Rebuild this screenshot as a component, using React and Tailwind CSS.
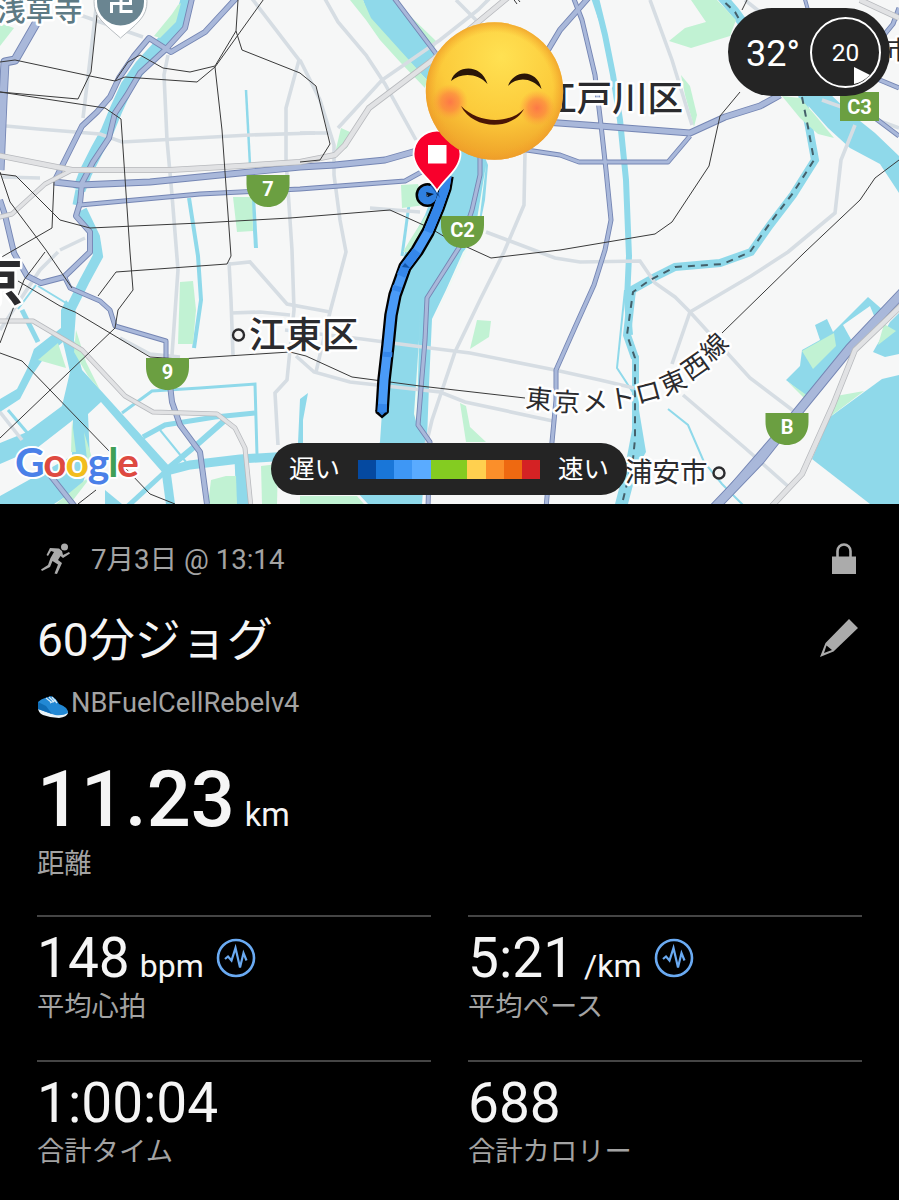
const WATER = "#8fd9ea";
const PARK = "#c1f2d3";

// rios y canales dibujados como linea
const canals = [
    { w: 13, d: "M188 -4L181 22L163 42L141 66L127 86L116 110L107 132L97 150L86 172L79 190" },
    { w: 7, d: "M79 190L76 205" },
    { w: 10, d: "M82 210L95 237L98 256L84 282L70 310" },
    { w: 4, d: "M189 198L198 256L201 300L194 348" },
    { w: 2.5, d: "M246 90L250 165" },
    { w: 4, d: "M253 196L256 248" },
    { w: 3, d: "M411 190L402 256" },
    { w: 5, d: "M143 437L165 425L215 417L255 413" },
    { w: 3, d: "M122 413L152 391L200 388L255 384L257 455" },
    { w: 6, d: "M165 471L200 442L225 420" },
    { w: 2, d: "M160 430L186 462" },
    { w: 9, d: "M167 471L190 465L240 459L290 456" },
    { w: 13, d: "M241 458L243 508" },
    { w: 9, d: "M166 471L171 508" },
    { w: 5, d: "M128 506L166 471" },
    { w: 5, d: "M22 310L38 342" },
    { w: 2, d: "M38 286L66 303M18 309L36 285" },
    { w: 3, d: "M8 410L30 436" },
    { w: 6, d: "M594 -10L605 35L613 75L620 120L626 180L629 256L627 300L630 335" },
    { w: 10, d: "M716 -10L735 12L755 40L790 80" },
    { w: 8, d: "M801 90L809 127L815 160L793 195L770 225L751 252L720 263L675 267L655 277L632 290L627 335L635 358" },
    { w: 2, d: "M625 290L617 368L634 394M668 409L688 425L704 462L722 484L744 506" },
    { w: 3, d: "M592 -4L600 20" },
];

const waters = [
    "M363 0L393 0L433 47L470 100L482 150L488 165L485 200L478 235L463 252L446 290L432 319L429 385L427 440L422 504L368 504L355 490L380 442L382 412L388 340L395 290L405 252L425 215L440 175L446 120L427 80L370 20Z",
    "M66 300L76 312L74 340L82 370L104 394L170 467L163 473L101 402L88 414L90 460L82 486L54 504L0 504L0 496L72 456L73 420L37 448L0 464L0 443L27 432L62 406L70 372L63 342L44 358L33 374L20 399L0 412L0 399L17 389L27 369L34 349L61 328L61 310Z",
    "M300 399L308 393L303 420L303 443L298 443Z",
    "M105 490L122 504L105 504Z",
    "M632 350L639 356L639 410L646 452L638 466L628 504L615 504L626 462L632 430Z",
    "M796 92L828 92L850 113L875 133L899 156L899 193L880 164L850 148L828 128Z",
    "M812 459L830 417L882 379L899 375L899 504L870 504Z",
    "M786 380L800 366L802 350L820 340L815 325L827 319L833 332L868 297L884 311L875 318L870 306L843 325L853 343L822 390L806 396Z",
    "M899 313L890 322L873 352L885 357L899 354Z",
];

const parks = [
    "M172 14L178 5L181 3L176 22L160 38L154 36Z",
    "M0 23L14 28L0 46Z",
    "M233 197L252 197L253 231L237 232Z",
    "M350 0L363 0L371 18L427 80L425 88L400 62L380 40L366 20Z",
    "M393 0L402 8L437 42L433 50Z",
    "M341 128L350 132L347 148L335 153Z",
    "M401 185L418 184L425 205L402 208Z",
    "M426 215L410 240L403 252L412 252L430 222Z",
    "M180 282L193 281L196 310L193 344L178 344Z",
    "M38 360L58 343L66 368Z",
    "M76 330L86 362L100 390L88 376L74 352Z",
    "M72 420L71 452L76 452ZM84 432L92 458L87 460Z",
    "M56 504L85 480L90 478L70 504Z",
    "M211 480L226 476L236 476L237 504L208 504Z",
    "M261 466L278 464L277 504L262 504Z",
    "M300 496L357 496L364 504L300 504Z",
    "M477 320L491 321L489 337L470 349Z",
    "M460 403L466 406L470 427L486 442L466 442Z",
    "M691 0L717 0L736 20L730 36L691 48L669 41L685 28L706 22Z",
    "M681 75L690 86L697 115L694 127L685 95Z",
    "M782 96L800 98L815 115L834 138L818 134L800 118Z",
    "M802 351L834 333L836 346L813 369Z",
    "M788 382L808 396L804 398Z",
    "M884 324L896 331L878 345Z",
    "M836 396L864 391L831 416Z",
];

const streets = [
    "M97 0L90 60L83 118",
    "M80 15L100 22L143 37",
    "M6 126L38 129L100 134L122 142L250 135L315 133",
    "M168 55L164 75L167 140L172 195L178 270L172 355",
    "M250 -4L299 60L286 108L286 160L292 250L294 310L287 380L275 393L278 445",
    "M2 177L40 178",
    "M60 250L85 238",
    "M0 330L40 270L58 252",
    "M320 -10L338 22L366 55L385 84L416 140",
    "M300 60L320 100L334 145L334 175L340 220L346 252L330 312L316 372",
    "M338 128L382 80L440 40L478 10L492 -4",
    "M456 0L476 20",
    "M300 133L330 133",
    "M370 208L420 212",
    "M525 152L524 205L504 252L480 300L455 352L432 420L426 445",
    "M486 232L555 258L580 262L640 261L655 283L675 297L690 312L720 345L750 378L795 412",
    "M690 312L672 364",
    "M690 312L751 276L788 252L835 213L841 160L855 125",
    "M650 0L672 60L692 125",
    "M745 0L760 12",
    "M285 330L362 339L430 348L470 353L555 370L600 380L634 388",
    "M230 264L250 262L287 304L330 312",
    "M229 262L231 300L233 355M231 313L260 312L290 315",
    "M296 356L314 372L350 382L440 392L465 402L553 421",
    "M683 395L745 448L790 488",
    "M120 338L150 354L180 357",
    "M0 412L22 440",
    "M822 100L850 110L899 128",
];

// autopistas
const majors = [
    { w: 9, d: "M38 20L15 60L5 62L3 100L0 170" },
    { w: 4, d: "M4 60L2 160" },
    { w: 6, d: "M193 -6L185 28L165 50L140 73L127 95L115 113L109 138L93 162L82 183L80 203L76 216L90 232L90 252L64 277L41 283L27 276L14 253L5 215L0 200" },
    { w: 6, d: "M240 -6L205 32L171 52L149 38L134 56L119 78L110 97L97 112L82 126L70 150L54 182" },
    { w: 7, d: "M54 182L80 185L150 182L240 173L300 167L335 165L385 160L420 150" },
    { w: 5, d: "M80 205L200 194L300 189L405 181L425 170" },
    { w: 5, d: "M64 276L70 288L100 301L110 310L115 326L166 341L166 362" },
    { w: 6, d: "M170 385L172 402L180 425L200 452L207 504" },
    { w: 6, d: "M50 475L76 508" },
    { w: 5, d: "M391 -6L434 51L470 100L480 150L480 175L472 210L460 246L427 298L425 340L418 425L430 442L428 508" },
    { w: 5, d: "M572 -6L582 20L595 75L601 125L606 170L611 220L605 250L594 285L576 325L556 370L556 400L552 442L546 508" },
    { w: 6, d: "M590 -4L560 30L548 50" },
    { w: 7, d: "M545 122L600 126L690 133L725 117L760 106L780 95" },
    { w: 5, d: "M520 149L560 155L579 162L668 162L690 136" },
    { w: 4, d: "M804 -4L808 10" },
    { w: 5, d: "M899 8L893 24L884 35M875 78L899 88M875 118L899 136" },
    { w: 10, d: "M905 290L850 348L797 413L760 460L712 510" },
    { w: 4, d: "M905 288L795 412L712 508" },
];

const highways = [
    { w: 6, d: "M-4 155L72 170L170 170L240 166L300 162L335 155L345 145L369 108L430 62L512 -6" },
    { w: 5, d: "M72 170L45 184L12 214L-4 218" },
    { w: 5, d: "M-4 321L33 321L82 350L125 396L153 412L217 414L235 428L245 448L251 508" },
    { w: 6, d: "M905 302L855 350L833 405L802 474L770 508" },
    { w: 6, d: "M860 0L899 18" },
];

const rails = [
    "M0 62L15 60L90 76L115 81L125 77L197 82L215 67L266 -4",
    "M97 15L91 72L78 99L0 92L105 108L121 119L130 252L133 290L118 310L115 328L0 438",
    "M115 81L128 62L140 55L163 68L190 72L215 66L236 31L238 0",
    "M236 31L242 50L300 73L316 86L330 144L320 160L300 162",
    "M215 67L222 130L231 256L227 264L116 272L98 296",
    "M0 174L16 176L60 220L90 228L200 223L290 218L390 210L430 228L445 237L491 258L560 250L655 234L672 222L709 166L720 116L740 92",
    "M54 182L52 228L0 258",
    "M0 172L10 202L46 250L72 288",
    "M18 281L60 306L75 312L150 357L180 359L290 352L306 356L352 377L420 386L525 398",
    "M45 252L24 280L0 343",
    "M0 353L22 361L110 452L150 494L175 504",
    "M96 490L78 504",
    "M722 333L805 252L860 200L875 178L899 160",
    "M748 -2L742 10",
    "M512 -3L517 4M516 -3L520 2",
];

const lineLabel = [
    { c: "東", x: 539, y: 399, r: 6 },
    { c: "京", x: 567, y: 402, r: 3 },
    { c: "メ", x: 595, y: 401, r: -3 },
    { c: "ト", x: 622, y: 398, r: -9 },
    { c: "ロ", x: 648, y: 392, r: -15 },
    { c: "東", x: 673, y: 382, r: -24 },
    { c: "西", x: 695, y: 366, r: -35 },
    { c: "線", x: 714, y: 347, r: -44 },
];

const shields = [
    { t: "7", x: 268, y: 175 },
    { t: "C2", x: 462.5, y: 216 },
    { t: "9", x: 167.5, y: 358 },
    { t: "B", x: 787, y: 413 },
];

const speedColors = [
    "bg-[#0549a0]", "bg-[#1976d8]", "bg-[#3e97f5]", "bg-[#5aabff]", "bg-[#84cc21]",
    "bg-[#84cc21]", "bg-[#ffd04f]", "bg-[#fb8f2a]", "bg-[#ee6911]", "bg-[#d42224]",
];

const ROUTE = "M382 412L384 380L388 345L391 315L395 295L405 267L417 251L428 232L438 208L445 188L447 176";

const MapLabel = ({ x, y, size, color = "#2b2b2e", weight = 500, children }) => (
    <text x={x} y={y} fontSize={size} fontWeight={weight} fill={color} stroke="#fff" strokeWidth="5"
        strokeLinejoin="round" paintOrder="stroke">
        {children}
    </text>
);

const Smile = () => (
    <g>
        <circle cx="494.5" cy="91" r="68.7" fill="url(#face)" />
        <circle cx="494.5" cy="91" r="68.7" fill="url(#faceShade)" />
        <ellipse cx="450" cy="102" rx="18" ry="18" fill="url(#blush)" />
        <ellipse cx="537" cy="108" rx="18" ry="18" fill="url(#blush)" />
        <path d="M451 81C456 65 481 63 487.500 84C478 73 461 72 451 81Z" fill="#2a1608" />
        <path d="M508 86C514 69 537 69 541.500 89C532 78 518 76 508 86Z" fill="#2a1608" />
        <path d="M461 106C478 123 508 125 524 109C512 131 473 130 461 106Z" fill="#4a1505" />
    </g>
);

const CityMap = () => (
    <svg viewBox="0 0 899 504" className="block h-[504px] w-[899px] font-['Noto_Sans_CJK_JP',sans-serif]" fill="none">
        <defs>
            <radialGradient id="face" cx="0.55" cy="0.25" r="0.8">
                <stop offset="0" stopColor="#ffe152" />
                <stop offset="0.55" stopColor="#fccb3b" />
                <stop offset="1" stopColor="#ec9a26" />
            </radialGradient>
            <radialGradient id="faceShade" cx="0.5" cy="0.5" r="0.5">
                <stop offset="0.85" stopColor="#f6a92c" stopOpacity="0" />
                <stop offset="1" stopColor="#ee9c2a" stopOpacity="0.75" />
            </radialGradient>
            <radialGradient id="blush">
                <stop offset="0" stopColor="#fd7448" stopOpacity="0.95" />
                <stop offset="0.5" stopColor="#fd7d42" stopOpacity="0.65" />
                <stop offset="1" stopColor="#ff9a3c" stopOpacity="0" />
            </radialGradient>
        </defs>
        <rect width="899" height="504" fill="#f6f7f7" />
        {waters.map((d) => <path key={d} d={d} fill={WATER} />)}
        {canals.map((c) => <path key={c.d} d={c.d} stroke={WATER} strokeWidth={c.w} />)}
        {parks.map((d) => <path key={d} d={d} fill={PARK} />)}
        {/* franja de tierra junto a la C2 */}
        <path d="M420 300L417 425L414 414L419 340ZM486 165L476 225L436 315L433 322L466 252L480 215Z" fill="#eefaf2" />
        {streets.map((d) => <path key={d} d={d} stroke="#d6dde3" strokeWidth="3.6" />)}
        {majors.map((m) => <path key={m.d} d={m.d} stroke="#7586b4" strokeWidth={m.w} strokeLinejoin="round" />)}
        {majors.map((m) => <path key={m.d} d={m.d} stroke="#a9b8da" strokeWidth={m.w - 1.8} strokeLinejoin="round" />)}
        {highways.map((m) => <path key={m.d} d={m.d} stroke="#b7b9bd" strokeWidth={m.w} strokeLinejoin="round" />)}
        {highways.map((m) => <path key={m.d} d={m.d} stroke="#e1e2e4" strokeWidth={m.w - 1.5} strokeLinejoin="round" />)}
        {rails.map((d) => <path key={d} d={d} stroke="#3a3a3a" strokeWidth="1" />)}
        <path d="M716 -6L735 12L742 24M802 97L808 127L814 160L793 193L770 223L750 252L723 264L675 267L650 280L633 292L627 335L635 358L635 439L633 459L622 504"
            stroke="#44606a" strokeWidth="2" strokeDasharray="7 6" />

        <MapLabel x="-3" y="21" size="28.5" color="#5d7a84" weight="500">浅草寺</MapLabel>
        <MapLabel x="541" y="111" size="35.5">江戸川区</MapLabel>
        <MapLabel x="249" y="348" size="36.5">江東区</MapLabel>
        <MapLabel x="-30" y="302" size="53" weight="700">京</MapLabel>
        <MapLabel x="625" y="482" size="27.5" weight="400">浦安市</MapLabel>
        <MapLabel x="886" y="59" size="25" weight="400">市川</MapLabel>
        {lineLabel.map((l) => (
            <g key={l.x} transform={`translate(${l.x} ${l.y}) rotate(${l.r})`} textAnchor="middle">
                <MapLabel x="0" y="9.5" size="26" weight="400">{l.c}</MapLabel>
            </g>
        ))}
        <circle cx="238.5" cy="335" r="5.5" stroke="#2b2b2e" strokeWidth="2.4" fill="#f3f3f3" />
        <circle cx="719" cy="473" r="5.5" stroke="#2b2b2e" strokeWidth="2.4" fill="#f3f3f3" />

        {shields.map((s) => (
            <g key={s.t} transform={`translate(${s.x} ${s.y})`}>
                <path d="M-21.5 0H21.5V9C21.5 23 12 32 0 32S-21.5 23 -21.5 9Z" fill="#6b9f41" />
                <text y="21" textAnchor="middle" fill="#fff" className="font-['Roboto',sans-serif] text-[20px] font-bold">{s.t}</text>
            </g>
        ))}
        <rect x="840" y="92" width="39" height="29" fill="#6b9f41" />
        <text x="859.5" y="113.5" textAnchor="middle" fill="#fff" className="font-['Roboto',sans-serif] text-[20px] font-bold">C3</text>

        <path d="M120.500 38C115 33 107 27 101 20A26.5 26.5 0 1 1 140 20C134 27 126 33 120.500 38Z" fill="#fff" stroke="#b9bec2" strokeWidth="1" />
        <circle cx="120.500" cy="2" r="23.500" fill="#6a8591" />
        <path d="M111.500 13V3.500H130.500V-8M121 -8V11.500H132.500" stroke="#fff" strokeWidth="3" />

        {/* recorrido */}
        <g strokeLinejoin="round">
            <path d={ROUTE} stroke="#000" strokeWidth="13.5" />
            <path d="M375.500 410L375.500 413L382 418.500L388.500 413L388.500 410Z" fill="#000" />
            <circle cx="427.500" cy="195" r="5.500" stroke="#000" strokeWidth="13" />
            <circle cx="427.500" cy="195" r="5.500" stroke="#2f80e0" strokeWidth="8" />
            <path d={ROUTE} stroke="#4a9bf7" strokeWidth="9" />
            <path d="M377.500 411L382 415.500L386.500 411Z" fill="#2f80e0" />
            <path d="M382.500 404L382 412M388 352L387.600 357M396 291L397.500 286M401 276L405 267L417 251M428 232L438 208L445 188L447 176" stroke="#3587ea" strokeWidth="9" />
            <path d="M426 192L434 194L428 197Z" fill="#07172c" />
            <path d="M402 267L410 268L405 263ZM430 185L440 198L436 185Z" fill="#1255a8" />
        </g>
        <path d="M437 191C431 180 413.500 169 413.500 154A23.500 23.500 0 0 1 460.500 154C460.500 169 443 180 437 191Z" fill="#f8002c" stroke="#fff" strokeWidth="1.8" />
        <rect x="428" y="145" width="18.5" height="18.5" fill="#fff" />
        <Smile />

        <text x="15" y="477" stroke="#fff" strokeWidth="4" strokeLinejoin="round" paintOrder="stroke"
            textLength="124" className="font-['Lato',sans-serif] text-[41px] font-bold">
            <tspan fill="#4a80e8">G</tspan><tspan fill="#de4a41">o</tspan><tspan fill="#f2bd1d">o</tspan><tspan fill="#4a80e8">g</tspan><tspan fill="#3f9f57">l</tspan><tspan fill="#de4a41">e</tspan>
        </text>
    </svg>
);

const PulseIcon = () => (
    <svg viewBox="0 0 40 40" className="h-10 w-10" fill="none" stroke="#6aaaf2">
        <circle cx="20" cy="20" r="18" strokeWidth="2.6" />
        <path d="M9 21L12 18.500L15.500 22.500L19.500 10L24 29.500L27.500 15L30.500 22.500" strokeWidth="2.2" />
    </svg>
);

const Stat = ({ value, unit, label, pulse }) => (
    <div className="h-[145px] border-t-[2px] border-[#454545] pt-3">
        <div className="flex h-[61px] items-baseline text-[55px] leading-[58px] text-[#f5f5f5]">
            <span>{value}</span>
            {unit && <span className="ml-[10px] text-[32px]">{unit}</span>}
            {pulse && <span className="mb-[3px] ml-3 self-center"><PulseIcon /></span>}
        </div>
        <div className="text-[27.3px] leading-[34px] text-[#a3a3a3]">{label}</div>
    </div>
);

const App = () => {
    return (
        <main className="h-[1200px] w-[899px] overflow-hidden bg-black font-['Roboto','Noto_Sans_CJK_JP',sans-serif]">
            <div className="relative h-[504px]">
                <CityMap />
                {/* temperatura y viento */}
                <div className="absolute top-2 left-[728px] flex h-[88px] w-[162px] items-center rounded-full bg-[#242424] pl-[18px] text-white">
                    <span className="w-[64px] pt-1 text-[36px]">32°</span>
                    <div className="relative flex h-[71px] w-[71px] items-center justify-center rounded-full border-2 border-white pt-[3px] text-[24.5px]">
                        20
                        <svg viewBox="0 0 16 18" className="absolute top-[48px] left-[42px] h-[18px] w-4">
                            <path d="M0 0L16 8Q9 15 0 17Z" fill="#fff" />
                        </svg>
                    </div>
                </div>
                {/* leyenda de velocidad */}
                <div className="absolute top-[443px] left-[271px] flex h-[52px] w-[356px] items-center justify-between rounded-full bg-[#242424] px-[18px] text-[25.5px] text-white">
                    <span>遅い</span>
                    <div className="flex h-[19px] w-[183px]">
                        {speedColors.map((color, index) => (
                            <div key={index} className={`h-full flex-1 ${color}`}></div>
                        ))}
                    </div>
                    <span>速い</span>
                </div>
            </div>

            <div className="px-[37px] pt-[36px]">
                <div className="flex h-10 items-center text-[27.6px] text-[#a3a3a3]">
                    <svg viewBox="0 0 32 32" className="mr-[19px] mb-[2px] ml-[3px] h-8 w-8" fill="#ababab">
                        <circle cx="24.500" cy="4" r="3.500" />
                        <path d="M10 5L19 5.500L22 8L23 12L29 9L30 10.500L23 15L20.500 13L18 17L22 20L17 31L14.500 30.500L18 21.500L12.500 18L10 24L2 28L1 26.500L8 22L10.500 15L14 9L11 8L8 13L6.500 12Z" />
                    </svg>
                    <span>7月3日 @ 13:14</span>
                    <svg viewBox="0 0 24 31" className="mr-[6px] mb-[3px] ml-auto h-[31px] w-6">
                        <path d="M5.500 14V8a6.500 6.500 0 0 1 13 0v6" fill="none" stroke="#ababab" strokeWidth="2.600" />
                        <path d="M0 13.500H24V31H0Z" fill="#ababab" />
                    </svg>
                </div>
                <div className="mt-6 flex h-[72px] items-center justify-between">
                    <h1 className="text-[46px] text-[#f5f5f5]">60分ジョグ</h1>
                    <svg viewBox="0 0 38 38" className="mr-1 mb-[5px] h-[38px] w-[38px]" fill="#ababab">
                        <path fillRule="evenodd" d="M29 0L38 9L13.500 32.500L0 38L5.500 24ZM6.500 26.500L4 34L12 31Z" />
                    </svg>
                </div>
                <div className="mt-[7px] flex h-10 items-center text-[27.2px] text-[#a3a3a3]">
                    <svg viewBox="0 0 32 22" className="mt-2 mr-[2px] h-[22px] w-8">
                        <path d="M1 11Q1 17 6 19Q14 22 22 22Q30 21 31 17L30 14Z" fill="#e9f3f8" />
                        <path d="M1 6Q4 3 8 2L14 0Q19 2 22 8Q31 11 31 17Q26 20 18 19Q9 16 1 13Z" fill="#2288d4" />
                        <path d="M1 6L9 10L15 18L1 13Z" fill="#0f6cb5" />
                        <path d="M9 2L14 6M12 1L17 6M15 1L20 7M13 7L19 4" stroke="#d9ecf7" strokeWidth="1.200" fill="none" />
                    </svg>
                    <span>NBFuelCellRebelv4</span>
                </div>

                <div className="mt-[35px] flex h-[89px] items-baseline text-[#f5f5f5]">
                    <span className="text-[77.5px] leading-[84px] font-medium">11.23</span>
                    <span className="ml-[10px] text-[32.5px]">km</span>
                </div>
                <div className="text-[27.3px] leading-[34px] text-[#a3a3a3]">距離</div>

                <div className="mt-[34px] grid grid-cols-2 gap-x-[37px]">
                    <Stat value="148" unit="bpm" label="平均心拍" pulse />
                    <Stat value="5:21" unit="/km" label="平均ペース" pulse />
                    <Stat value="1:00:04" label="合計タイム" />
                    <Stat value="688" label="合計カロリー" />
                </div>
            </div>
        </main>
    );
};

export default App;
